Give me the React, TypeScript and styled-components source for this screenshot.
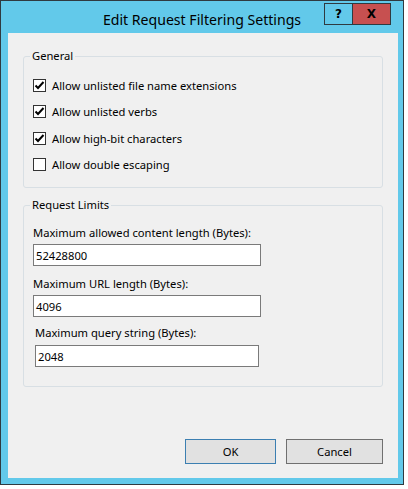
import React from "react";
import styled, { createGlobalStyle } from "styled-components";

const frameBlue = "#62c9ea";

const GlobalStyle = createGlobalStyle`
  html, body {
    margin: 0;
    padding: 0;
    background: #ffffff;
  }
  body {
    font-family: "Noto Sans", "Open Sans", sans-serif;
    font-size: 11.2px;
    color: #000;
  }
`;

const Screen = styled.div`
  display: flex;
  width: 408px;
  height: 489px;
  overflow: hidden;
`;

const DialogFrame = styled.div`
  width: 404px;
  height: 485px;
  box-sizing: border-box;
  border: 1px solid #2f3a40;
  background: ${frameBlue};
  display: flex;
  flex-direction: column;
  padding: 0 5px 6px 7px;
`;

const TitleBar = styled.div`
  position: relative;
  height: 32px;
  flex-shrink: 0;
  display: flex;
  align-items: center;
  justify-content: center;
  margin: 0 -5px 0 -7px;
  background: ${frameBlue};
`;

const Title = styled.div`
  font-size: 14.1px;
  color: #000;
  padding-top: 4px;
`;

const Caption = styled.div`
  position: absolute;
  top: 2px;
  right: 12px;
  display: flex;
  border: 1px solid #2f3a40;
`;

const CaptionButton = styled.div<{ $close?: boolean }>`
  width: ${(p) => (p.$close ? 37 : 27)}px;
  height: 20px;
  display: flex;
  align-items: center;
  justify-content: center;
  background: ${(p) => (p.$close ? "#c75050" : frameBlue)};
  border-left: ${(p) => (p.$close ? "1px solid #2f3a40" : "none")};
  font-family: "DejaVu Sans", sans-serif;
  font-weight: bold;
  font-size: 12px;
`;

const Client = styled.div`
  flex: 1;
  background: #f0f0f0;
  display: flex;
  flex-direction: column;
  padding: 15px 15px 14px 15px;
  box-sizing: border-box;
`;

const Group = styled.fieldset<{ $gap?: number }>`
  margin: ${(p) => p.$gap ?? 0}px 0 0 0;
  padding: 0 8px 0 8px;
  border: 1px solid #d8dfe4;
  border-radius: 3px;
  min-width: 0;
`;

const Legend = styled.legend`
  padding: 0 2px;
  margin-left: -2px;
  line-height: 16px;
`;

const CheckList = styled.div`
  display: flex;
  flex-direction: column;
  padding: 8px 0 9px 1px;
`;

const CheckRow = styled.label`
  display: flex;
  align-items: center;
  gap: 6px;
  height: 26.5px;
`;

const Box = styled.span`
  width: 13px;
  height: 13px;
  box-sizing: border-box;
  border: 1px solid #333333;
  background: #ffffff;
  display: flex;
  align-items: center;
  justify-content: center;
`;

const Fields = styled.div`
  display: flex;
  flex-direction: column;
  padding: 12px 0 19px 1px;
`;

const Field = styled.div<{ $indent?: number; $top?: number }>`
  display: flex;
  flex-direction: column;
  margin-top: ${(p) => p.$top ?? 0}px;
  padding-left: ${(p) => p.$indent ?? 0}px;
`;

const FieldLabel = styled.div<{ $gap: number }>`
  line-height: 16px;
  margin-bottom: ${(p) => p.$gap}px;
`;

const TextBox = styled.div<{ $w: number }>`
  width: ${(p) => p.$w}px;
  height: 22px;
  box-sizing: border-box;
  border: 1px solid #7a7a7a;
  background: #ffffff;
  display: flex;
  align-items: center;
  padding-left: 2px;
`;

const Buttons = styled.div`
  margin-top: auto;
  display: flex;
  justify-content: flex-end;
  gap: 10px;
`;

const Button = styled.div<{ $w: number; $default?: boolean }>`
  width: ${(p) => p.$w}px;
  height: 25px;
  box-sizing: border-box;
  border: 1px solid ${(p) => (p.$default ? "#3c7fb1" : "#707070")};
  background: #e1e1e1;
  display: flex;
  align-items: center;
  justify-content: center;
`;

const Tick = () => (
  <svg width="11" height="11" viewBox="0 0 11 11">
    <path d="M1.5 5.5 L4 8 L9.5 2" fill="none" stroke="#000" strokeWidth="2" />
  </svg>
);

const checks = [
  { text: "Allow unlisted file name extensions", on: true },
  { text: "Allow unlisted verbs", on: true },
  { text: "Allow high-bit characters", on: true },
  { text: "Allow double escaping", on: false },
];

export default function App() {
  return (
    <Screen>
      <GlobalStyle />
      <DialogFrame>
        <TitleBar>
          <Title>Edit Request Filtering Settings</Title>
          <Caption>
            <CaptionButton>?</CaptionButton>
            <CaptionButton $close>X</CaptionButton>
          </Caption>
        </TitleBar>
        <Client>
          <Group>
            <Legend>General</Legend>
            <CheckList>
              {checks.map((c) => (
                <CheckRow key={c.text}>
                  <Box>{c.on && <Tick />}</Box>
                  {c.text}
                </CheckRow>
              ))}
            </CheckList>
          </Group>
          <Group $gap={9}>
            <Legend>Request Limits</Legend>
            <Fields>
              <Field>
                <FieldLabel $gap={3}>Maximum allowed content length (Bytes):</FieldLabel>
                <TextBox $w={228}>52428800</TextBox>
              </Field>
              <Field $top={10}>
                <FieldLabel $gap={3}>Maximum URL length (Bytes):</FieldLabel>
                <TextBox $w={228}>4096</TextBox>
              </Field>
              <Field $top={8} $indent={2}>
                <FieldLabel $gap={4}>Maximum query string (Bytes):</FieldLabel>
                <TextBox $w={224}>2048</TextBox>
              </Field>
            </Fields>
          </Group>
          <Buttons>
            <Button $w={91} $default>OK</Button>
            <Button $w={97}>Cancel</Button>
          </Buttons>
        </Client>
      </DialogFrame>
    </Screen>
  );
}
